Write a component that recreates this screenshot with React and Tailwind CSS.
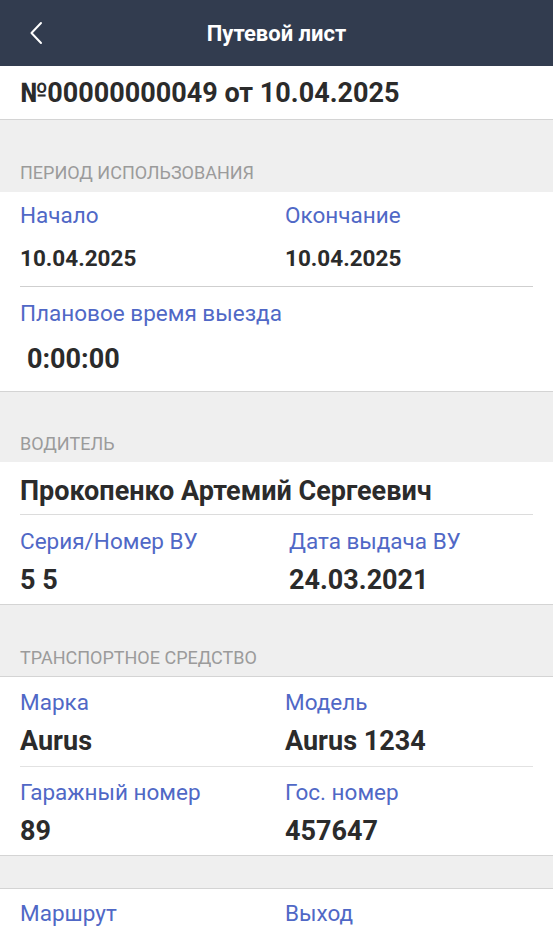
import React from "react";

const Label = ({ children }) => (
  <div className="text-[22.5px] leading-[28px] text-[#5068c6]">{children}</div>
);

const SectionTitle = ({ children, className }) => (
  <div className={`bg-[#efefef] px-5 text-[18px] leading-6 uppercase text-[#9b9b9b] ${className}`}>
    {children}
  </div>
);

const App = () => {
  return (
    <div
      className="flex min-h-[945px] flex-col bg-[#efefef] text-[#2b2b2b]"
      style={{ fontFamily: "Roboto, 'Noto Sans', sans-serif" }}
    >
      {/* шапка */}
      <div className="relative flex h-[66px] items-center justify-center bg-[#323c4f]">
        <button className="absolute left-[24px] top-[18px] flex h-[30px] w-[24px] items-center justify-center">
          <svg width="14" height="24" viewBox="0 0 14 24" fill="none">
            <path d="M12 2 L2.5 12 L12 22" stroke="#ffffff" strokeWidth="2" strokeLinecap="round" strokeLinejoin="round" />
          </svg>
        </button>
        <h1 className="text-[22px] font-bold text-white">Путевой лист</h1>
      </div>

      {/* номер */}
      <div className="flex h-[54px] items-center border-b border-[#d4d4d4] bg-white px-5">
        <div className="text-[27px] font-bold leading-8">№00000000049 от 10.04.2025</div>
      </div>

      <SectionTitle className="pt-[41px] pb-[7px]">Период использования</SectionTitle>

      <div className="border-b border-[#d4d4d4] bg-white">
        <div className="mx-5 grid grid-cols-[265px_1fr] border-b border-[#cfcfcf] pt-[9px] pb-[14px]">
          <div>
            <Label>Начало</Label>
            <div className="mt-[15px] text-[22.5px] font-bold leading-[28px]">10.04.2025</div>
          </div>
          <div>
            <Label>Окончание</Label>
            <div className="mt-[15px] text-[22.5px] font-bold leading-[28px]">10.04.2025</div>
          </div>
        </div>
        <div className="px-5 pt-3 pb-4">
          <Label>Плановое время выезда</Label>
          <div className="mt-4 pl-[7px] text-[27px] font-bold leading-8">0:00:00</div>
        </div>
      </div>

      <SectionTitle className="pt-10 pb-[6px]">Водитель</SectionTitle>

      <div className="border-b border-[#d4d4d4] bg-white">
        <div className="mx-5 border-b border-[#dcdcdc] pt-[13px] pb-[7px] text-[27px] font-bold leading-8">
          Прокопенко Артемий Сергеевич
        </div>
        <div className="mx-5 grid grid-cols-[269px_1fr] pt-3 pb-2">
          <div>
            <Label>Серия/Номер ВУ</Label>
            <div className="mt-[9px] text-[27px] font-bold leading-8">5 5</div>
          </div>
          <div>
            <Label>Дата выдача ВУ</Label>
            <div className="mt-[9px] text-[27px] font-bold leading-8">24.03.2021</div>
          </div>
        </div>
      </div>

      <SectionTitle className="pt-[41px] pb-[6px]">Транспортное средство</SectionTitle>

      <div className="border-y border-[#d4d4d4] bg-white">
        <div className="mx-5 grid grid-cols-[265px_1fr] border-b border-[#e2e2e2] pt-[11px] pb-[9px]">
          <div>
            <Label>Марка</Label>
            <div className="mt-[9px] text-[27px] font-bold leading-8">Aurus</div>
          </div>
          <div>
            <Label>Модель</Label>
            <div className="mt-[9px] text-[27px] font-bold leading-8">Aurus 1234</div>
          </div>
        </div>
        <div className="mx-5 grid grid-cols-[265px_1fr] pt-[11px] pb-2">
          <div>
            <Label>Гаражный номер</Label>
            <div className="mt-[9px] text-[27px] font-bold leading-8">89</div>
          </div>
          <div>
            <Label>Гос. номер</Label>
            <div className="mt-[9px] text-[27px] font-bold leading-8">457647</div>
          </div>
        </div>
      </div>

      <div className="h-[32px]" />

      <div className="flex-1 border-t border-[#d4d4d4] bg-white">
        <div className="mx-5 grid grid-cols-[265px_1fr] pt-[10px] pb-4">
          <Label>Маршрут</Label>
          <Label>Выход</Label>
        </div>
      </div>
    </div>
  );
};

export default App;
